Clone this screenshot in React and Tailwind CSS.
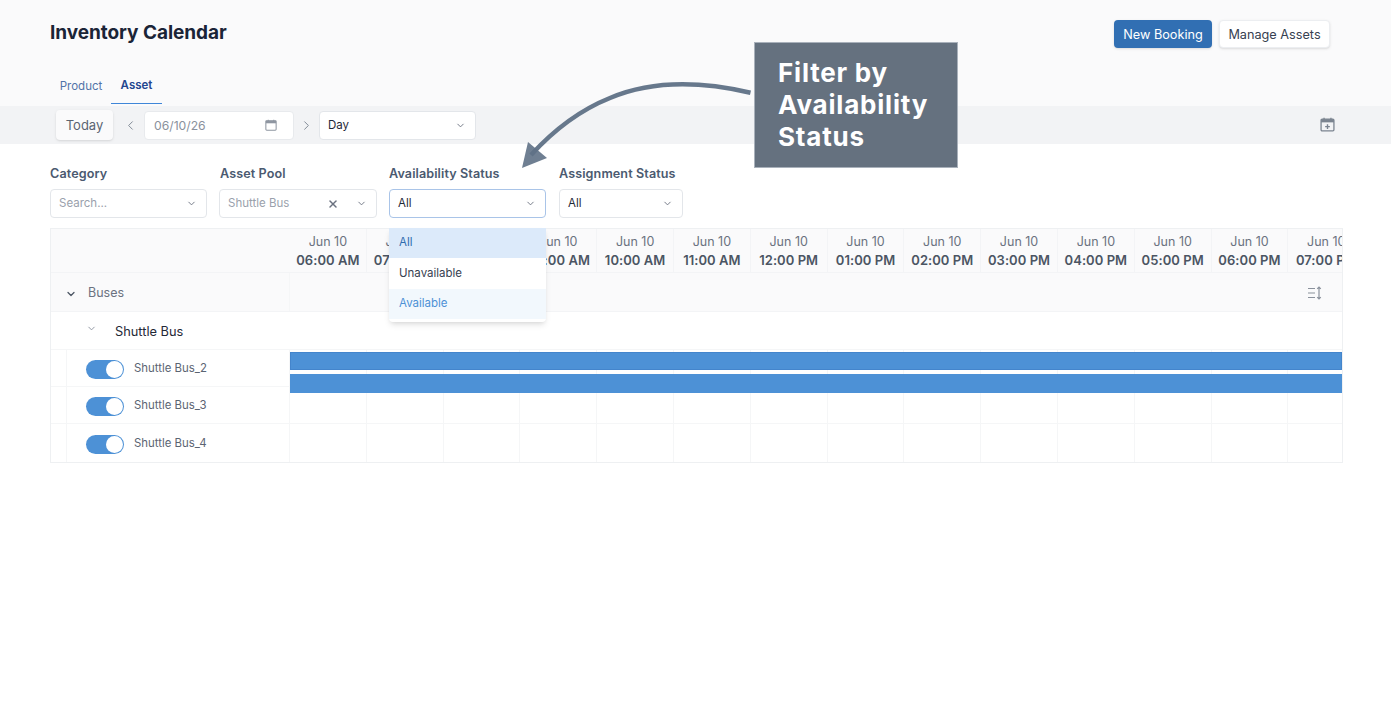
import { ChevronDown, ChevronLeft, ChevronRight, X } from "lucide-react";

const HOURS = [
  "06:00 AM", "07:00 AM", "08:00 AM", "09:00 AM", "10:00 AM", "11:00 AM", "12:00 PM",
  "01:00 PM", "02:00 PM", "03:00 PM", "04:00 PM", "05:00 PM", "06:00 PM", "07:00 PM",
];

const ASSETS = [
  { name: "Shuttle Bus_2", h: "h-[37px]" },
  { name: "Shuttle Bus_3", h: "h-[37px]" },
  { name: "Shuttle Bus_4", h: "h-[39px]" },
];

function Select({ width, value, placeholder, focused, clearable }) {
  return (
    <div
      className={`flex h-[29px] items-center rounded border bg-white pl-2 pr-[9px] text-[11.5px] ${width} ${
        focused ? "border-[#a9c4e8]" : "border-[#e3e6ea]"
      }`}
    >
      <span className={`flex-1 ${placeholder ? "text-[#9aa1ac]" : "text-[#1f2937]"}`}>{value}</span>
      {clearable && <X className="mr-[17px] h-[12px] w-[12px] text-[#6b7280]" strokeWidth={3} />}
      <ChevronDown className="h-[11px] w-[11px] text-[#6b7280]" />
    </div>
  );
}

function Filter({ label, children, labelClass = "" }) {
  return (
    <div className="flex flex-col">
      <div className={`mb-[7px] h-[16px] text-[12.6px] font-semibold leading-[16px] tracking-[0.1px] text-[#4b5a70] ${labelClass}`}>
        {label}
      </div>
      {children}
    </div>
  );
}

function Toggle() {
  return (
    <div className="mt-[1px] flex h-[19px] w-[38px] items-center justify-end rounded-full bg-[#4d91d6] pr-[1px]">
      <div className="h-[17px] w-[17px] rounded-full bg-white" />
    </div>
  );
}

function GridCells() {
  return (
    <div className="flex flex-1">
      {HOURS.map((h) => (
        <div key={h} className="w-[76.8px] shrink-0 border-r border-[#f5f6f7]" />
      ))}
    </div>
  );
}

function CalendarIcon({ plus, className }) {
  return (
    <svg className={className} viewBox="0 0 14 14" fill="none">
      <rect x="1" y="2" width="12" height="11" rx="1" stroke="currentColor" strokeWidth="1.2" />
      <rect x="1" y="2" width="12" height="3" fill="currentColor" />
      <path d="M3.8 .8v2M10.2 .8v2" stroke="currentColor" strokeWidth="1.2" />
      {plus && <path d="M7 6.8v4.4M4.8 9h4.4" stroke="currentColor" strokeWidth="1.3" />}
    </svg>
  );
}

export default function App() {
  return (
    <div className="relative h-[724px] w-full overflow-hidden bg-white font-['Inter',sans-serif]">
      {/* Page header */}
      <div className="h-[106px] bg-[#fafafb] pl-[50px] pr-[61px]">
        <div className="flex justify-between pt-[20px]">
          <h1 className="pt-[1px] text-[19px] font-bold leading-[24px] tracking-[-0.05px] text-[#1a2437]">Inventory Calendar</h1>
          <div className="flex gap-[7px]">
            <button className="h-[28px] w-[98px] rounded bg-[#316fb3] pt-[1px] text-[12.7px] text-white shadow-sm">
              New Booking
            </button>
            <button className="h-[28px] w-[111px] rounded border border-[#eceef1] bg-white pt-[1px] text-[12.7px] text-[#374151] shadow-sm">
              Manage Assets
            </button>
          </div>
        </div>
        <div className="mt-[21px] flex text-[11.5px]">
          <div className="flex h-[35px] w-[61px] items-center justify-center pl-[1px] text-[#5273a8]">Product</div>
          <div className="flex h-[35px] w-[51px] items-center justify-center border-b border-[#3f86d8] font-semibold text-[#23468f]">
            Asset
          </div>
        </div>
      </div>

      {/* Date toolbar */}
      <div className="flex h-[38px] items-center bg-[#f2f3f5] pl-[56px] pr-[56px]">
        <button className="h-[30px] w-[57px] rounded bg-[#fafafb] pt-[1px] text-[13px] text-[#5b6472] shadow">Today</button>
        <ChevronLeft className="ml-[10px] h-[15px] w-[15px] text-[#7b8490]" strokeWidth={1.5} />
        <div className="ml-[6px] flex h-[29px] w-[150px] items-center rounded border border-[#e8eaed] bg-white pl-[9px] pr-[16px] text-[12.2px] text-[#8a919c]">
          <span className="flex-1 pt-[3px]">06/10/26</span>
          <CalendarIcon className="h-[12px] w-[12px] text-[#8f96a1]" />
        </div>
        <ChevronRight className="ml-[5px] h-[15px] w-[15px] text-[#7b8490]" strokeWidth={1.5} />
        <div className="ml-[5px] pt-[1px]">
          <Select width="w-[157px]" value="Day" />
        </div>
        <CalendarIcon plus className="mb-[1px] ml-auto h-[15px] w-[15px] text-[#7b8490]" />
      </div>

      {/* Filters */}
      <div className="flex gap-[12px] pl-[50px] pt-[22px]">
        <Filter label="Category">
          <Select width="w-[157px]" value="Search..." placeholder />
        </Filter>
        <Filter label="Asset Pool" labelClass="pl-[1px]">
          <Select width="w-[158px]" value="Shuttle Bus" placeholder clearable />
        </Filter>
        <Filter label="Availability Status">
          <Select width="w-[157px]" value="All" focused />
        </Filter>
        <div className="pl-[1px]">
          <Filter label="Assignment Status">
            <Select width="w-[124px]" value="All" />
          </Filter>
        </div>
      </div>

      {/* Calendar grid */}
      <div className="ml-[50px] mr-[48px] mt-[10px] h-[235px] overflow-hidden border border-[#eef0f2] bg-white">
        <div className="flex h-[44px] border-b border-[#f3f4f6] bg-[#fafafb]">
          <div className="w-[239px] shrink-0" />
          {HOURS.map((h) => (
            <div key={h} className="flex w-[76.8px] shrink-0 flex-col items-center border-r border-[#f3f4f6] pt-[5px]">
              <div className="text-[12.5px] leading-[16px] text-[#6b7280]">Jun 10</div>
              <div className="mt-[2px] whitespace-nowrap text-[13px] font-semibold leading-[16px] tracking-[0.05px] text-[#4b5563]">{h}</div>
            </div>
          ))}
        </div>
        <div className="flex h-[39px] items-center border-b border-[#f3f4f6] bg-[#fafafb]">
          <div className="flex h-full w-[239px] shrink-0 items-center border-r border-[#f5f6f7] pl-[14px] pt-[3px]">
            <ChevronDown className="h-[12px] w-[12px] text-[#4b5563]" strokeWidth={2.5} />
            <span className="ml-[11px] text-[12.5px] text-[#6b7280]">Buses</span>
          </div>
          <div className="ml-auto mr-[19px] flex items-center pt-[2px] text-[#8a919c]">
            <svg width="16" height="14" viewBox="0 0 16 14" fill="none" stroke="currentColor" strokeWidth="1.2">
              <path d="M1 2.5h7M1 7h7M1 11.5h7" />
              <path d="M12 1v12M10.2 2.8 12 1l1.8 1.8M10.2 11.2 12 13l1.8-1.8" />
            </svg>
          </div>
        </div>
        <div className="flex h-[37px] items-center pl-[35px]">
          <ChevronDown className="mb-[4px] h-[11px] w-[11px] text-[#8a919c]" />
          <span className="ml-[18px] pt-[2px] text-[12.8px] text-[#1f2937]">Shuttle Bus</span>
        </div>
        <div className="relative">
          {ASSETS.map((a) => (
            <div key={a.name} className={`flex border-t border-[#f5f6f7] ${a.h}`}>
              <div className="ml-[15px] flex w-[224px] shrink-0 items-center border-l border-r border-[#f5f6f7] pl-[19px] pt-[1px]">
                <Toggle />
                <span className="ml-[10px] pt-[1px] text-[11.4px] text-[#5b6472]">{a.name}</span>
              </div>
              <GridCells />
            </div>
          ))}
          {/* booking bars */}
          <div className="absolute left-[239px] right-0 top-[3px] h-[18px] border border-[#4485cc] bg-[#4d91d6]" />
          <div className="absolute left-[239px] right-0 top-[25px] h-[19px] bg-[#4d91d6]" />
        </div>
      </div>

      {/* Availability dropdown */}
      <div className="absolute left-[389px] top-[228px] w-[157px] overflow-hidden rounded-b bg-white pb-[3px] text-[11.5px] shadow-md">
        <div className="flex h-[30px] items-center bg-[#dceafa] pl-[10px] text-[#2f6cb0]">All</div>
        <div className="flex h-[31px] items-center pl-[10px] text-[#374151]">Unavailable</div>
        <div className="flex h-[30px] items-center bg-[#f2f8fd] pl-[10px] text-[#4d91d6]">Available</div>
      </div>

      {/* Callout */}
      <div className="absolute left-[754px] top-[42px] h-[126px] w-[204px] border border-[#a9b1bb] bg-[#65717f] pl-[23px] pt-[14px] text-[26px] font-bold leading-[32px] tracking-[0.8px] text-white">
        Filter by
        <br />
        Availability
        <br />
        Status
      </div>
      <svg className="absolute left-[510px] top-[75px]" width="250" height="100" viewBox="510 75 250 100" fill="none">
        <path d="M750.5 92.7 C 700 81 650 81 610 98 C 580 110 552 132 531 155" stroke="#5f7186" strokeWidth="4.5" opacity="0.95" />
        <path d="M522 168 L528 142 L547 158 Z" fill="#5f7186" opacity="0.9" />
      </svg>
    </div>
  );
}
